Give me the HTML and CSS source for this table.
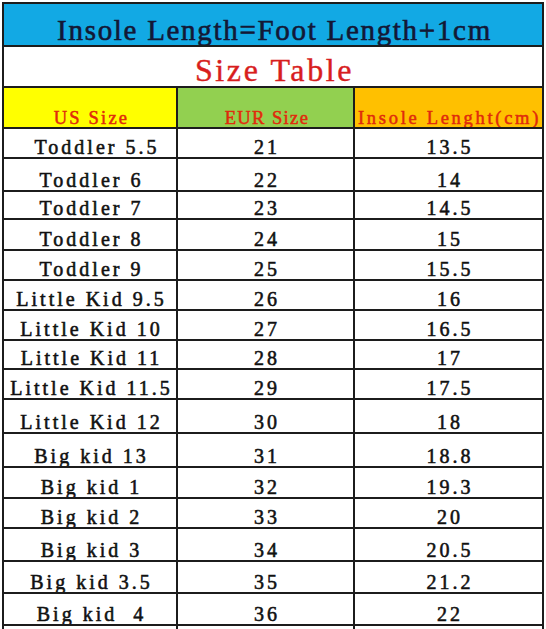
FILE: index.html
```html
<!DOCTYPE html>
<html>
<head>
<meta charset="utf-8">
<link rel="stylesheet" href="styles.css">
</head>
<body>
<table class="size-table">
  <colgroup>
    <col class="c1"><col class="c2"><col class="c3">
  </colgroup>
  <tr class="title-row"><td colspan="3">Insole Length=Foot Length+1cm</td></tr>
  <tr class="sub-row"><td colspan="3">Size Table</td></tr>
  <tr class="head-row">
    <td class="h-us">US Size</td>
    <td class="h-eur">EUR Size</td>
    <td class="h-in">Insole Lenght(cm)</td>
  </tr>
  <tr class="r30"><td class="shift">Toddler 5.5</td><td>21</td><td>13.5</td></tr>
  <tr class="r33"><td>Toddler 6</td><td>22</td><td>14</td></tr>
  <tr class="r28"><td>Toddler 7</td><td>23</td><td>14.5</td></tr>
  <tr class="r31"><td>Toddler 8</td><td>24</td><td>15</td></tr>
  <tr class="r30"><td>Toddler 9</td><td>25</td><td>15.5</td></tr>
  <tr class="r30"><td>Little Kid 9.5</td><td>26</td><td>16</td></tr>
  <tr class="r30"><td>Little Kid 10</td><td>27</td><td>16.5</td></tr>
  <tr class="r29"><td>Little Kid 11</td><td>28</td><td>17</td></tr>
  <tr class="r30"><td>Little Kid 11.5</td><td>29</td><td>17.5</td></tr>
  <tr class="r34"><td>Little Kid 12</td><td>30</td><td>18</td></tr>
  <tr class="r34"><td>Big kid 13</td><td>31</td><td>18.8</td></tr>
  <tr class="r31"><td>Big kid 1</td><td>32</td><td>19.3</td></tr>
  <tr class="r30"><td>Big kid 2</td><td>33</td><td>20</td></tr>
  <tr class="r33"><td>Big kid 3</td><td>34</td><td>20.5</td></tr>
  <tr class="r32"><td>Big kid 3.5</td><td>35</td><td>21.2</td></tr>
  <tr class="r32"><td>Big kid  4</td><td>36</td><td>22</td></tr>
  <tr class="r-tail"><td></td><td></td><td></td></tr>
</table>
</body>
</html>
```
FILE: styles.css
```css
html, body {
  margin: 0;
  padding: 0;
  background: #ffffff;
  overflow: hidden;
}
body {
  height: 629px;
  padding-top: 2px;
  padding-left: 2px;
  box-sizing: border-box;
}
.size-table {
  border-collapse: collapse;
  table-layout: fixed;
  width: 542px;
  font-family: "Liberation Serif", "Times New Roman", serif;
  color: #111111;
}
.c1 { width: 174px; }
.c2 { width: 177px; }
.c3 { width: 189px; }
.size-table td {
  border: 2px solid #1c1c1c;
  padding: 0 0 0 3px;
  text-align: center;
  vertical-align: bottom;
  white-space: pre;
  font-size: 20px;
  line-height: 20px;
  letter-spacing: 3px;
  -webkit-text-stroke: 0.55px #111111;
  overflow: hidden;
}
.size-table td.shift { padding-left: 14px; }
.title-row { height: 43px; }
.title-row td {
  background: #12a9e4;
  color: #121836;
  font-size: 29px;
  line-height: 29px;
  letter-spacing: 1.7px;
  -webkit-text-stroke: 0.6px #121836;
}
.sub-row { height: 41px; }
.sub-row td {
  background: #ffffff;
  color: #d81e1e;
  font-size: 32px;
  line-height: 31px;
  letter-spacing: 2.6px;
  -webkit-text-stroke: 0.4px #d81e1e;
}
.head-row { height: 41px; }
.head-row td {
  color: #e02a0c;
  font-size: 18.5px;
  line-height: 18px;
  -webkit-text-stroke: 0.5px #e02a0c;
}
.head-row td.h-us { letter-spacing: 2.2px; }
.head-row td.h-eur { letter-spacing: 1.4px; }
.head-row td.h-in { letter-spacing: 2.7px; padding-left: 2px; }
.h-us { background: #ffff00; }
.h-eur { background: #92d050; }
.h-in { background: #ffc000; }
.r28 { height: 28px; }
.r29 { height: 29px; }
.r30 { height: 30px; }
.r31 { height: 31px; }
.r32 { height: 32px; }
.r33 { height: 33px; }
.r34 { height: 34px; }
.r-tail { height: 12px; }
```
